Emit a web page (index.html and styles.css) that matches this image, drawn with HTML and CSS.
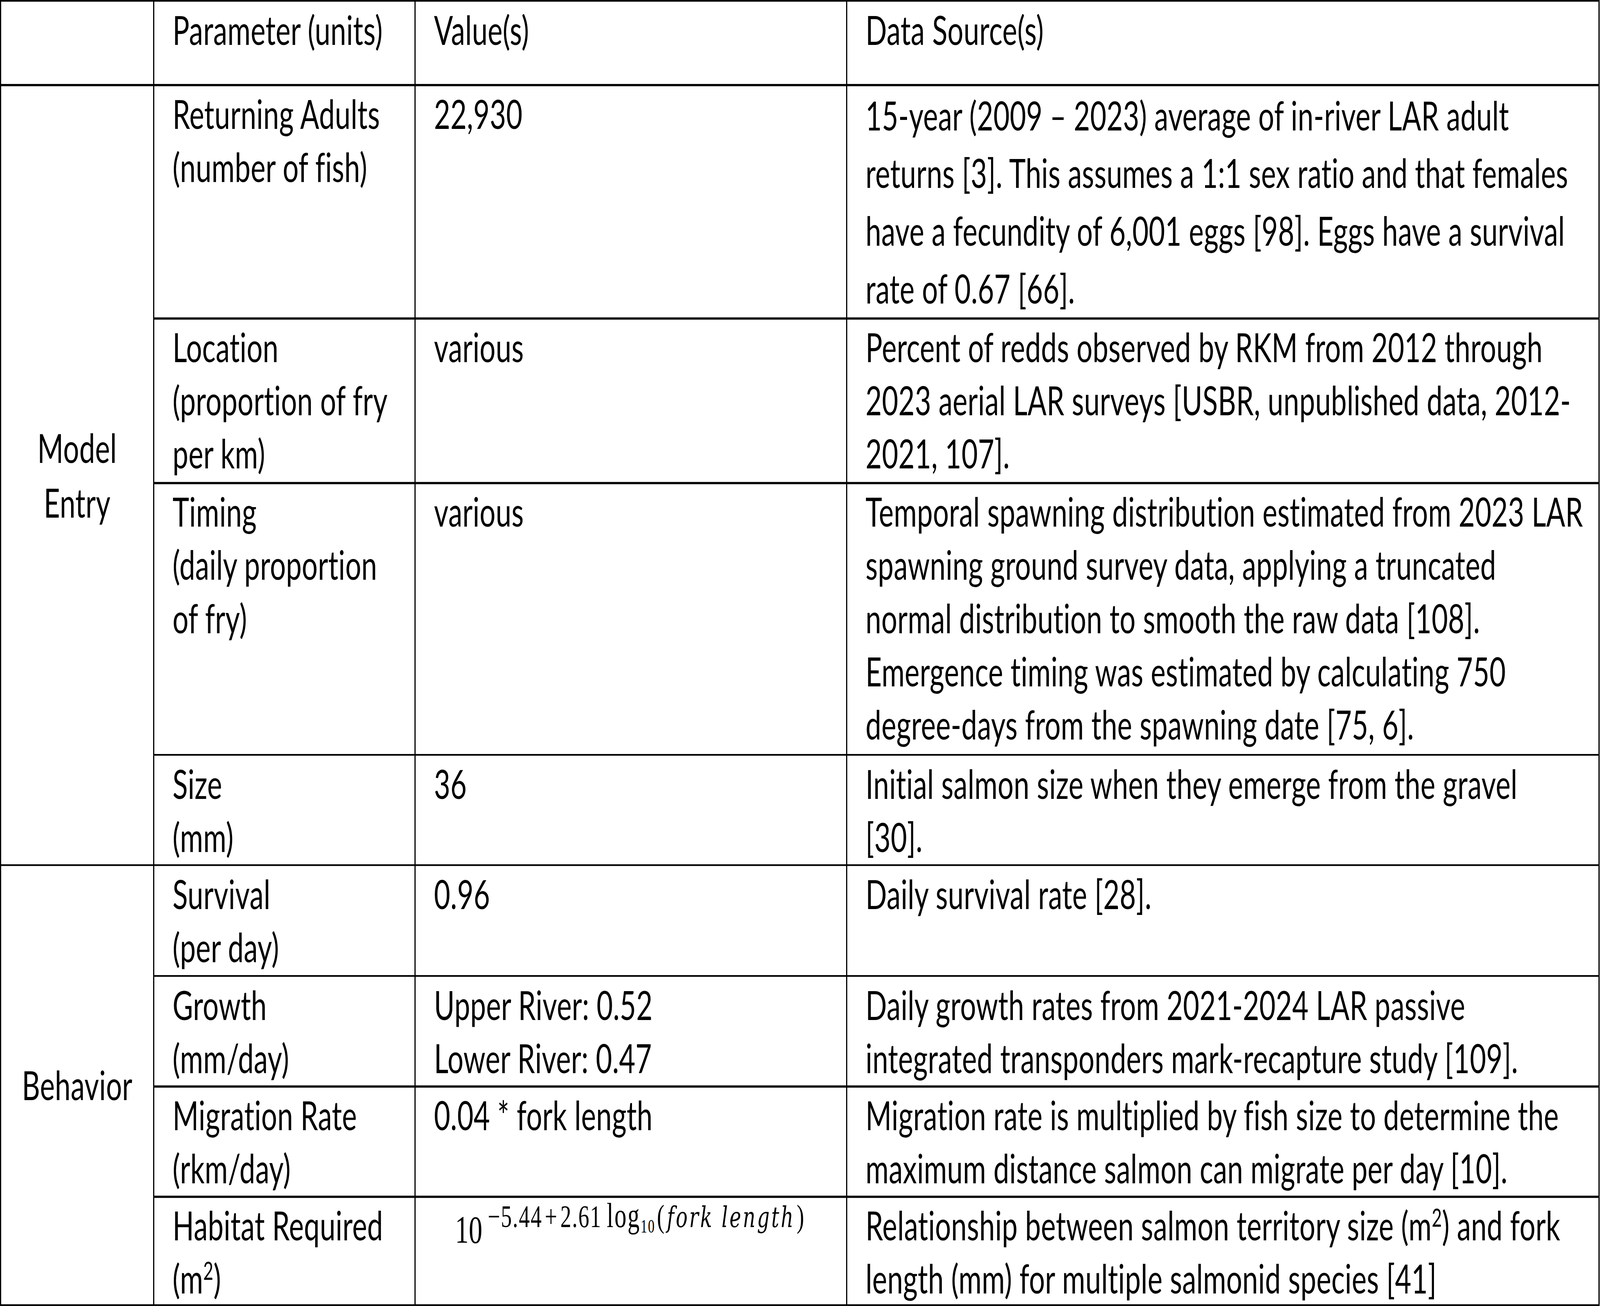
FILE: index.html
```html
<!DOCTYPE html>
<html lang="en">
<head>
<meta charset="utf-8">
<title>Model parameters</title>
<link rel="stylesheet" href="styles.css">
</head>
<body>
<div class="sheet">
  <div class="cell"></div>
  <div class="cell">Parameter (units)</div>
  <div class="cell">Value(s)</div>
  <div class="cell">Data Source(s)</div>

  <div class="cell group">Model<br>Entry</div>
  <div class="cell">Returning Adults<br>(number of fish)</div>
  <div class="cell">22,930</div>
  <div class="cell loose">15-year (2009 – 2023) average of in-river LAR adult<br>returns [3]. This assumes a 1:1 sex ratio and that females<br>have a fecundity of 6,001 eggs [98]. Eggs have a survival<br>rate of 0.67 [66].</div>

  <div class="cell">Location<br>(proportion of fry<br>per km)</div>
  <div class="cell">various</div>
  <div class="cell">Percent of redds observed by RKM from 2012 through<br>2023 aerial LAR surveys [USBR, unpublished data, 2012-<br>2021, 107].</div>

  <div class="cell">Timing<br>(daily proportion<br>of fry)</div>
  <div class="cell">various</div>
  <div class="cell">Temporal spawning distribution estimated from 2023 LAR<br>spawning ground survey data, applying a truncated<br>normal distribution to smooth the raw data [108].<br>Emergence timing was estimated by calculating 750<br>degree-days from the spawning date [75, 6].</div>

  <div class="cell">Size<br>(mm)</div>
  <div class="cell">36</div>
  <div class="cell">Initial salmon size when they emerge from the gravel<br>[30].</div>

  <div class="cell group">Behavior</div>
  <div class="cell">Survival<br>(per day)</div>
  <div class="cell">0.96</div>
  <div class="cell">Daily survival rate [28].</div>

  <div class="cell">Growth<br>(mm/day)</div>
  <div class="cell">Upper River: 0.52<br>Lower River: 0.47</div>
  <div class="cell">Daily growth rates from 2021-2024 LAR passive<br>integrated transponders mark-recapture study [109].</div>

  <div class="cell">Migration Rate<br>(rkm/day)</div>
  <div class="cell">0.04 * fork length</div>
  <div class="cell">Migration rate is multiplied by fish size to determine the<br>maximum distance salmon can migrate per day [10].</div>

  <div class="cell">Habitat Required<br>(m<sup class="pow">2</sup>)</div>
  <div class="cell formula"><span class="math"><span class="mbase">10</span><span class="msup">−5.44<span class="mop">+</span>2.61<span class="mfn">log</span><span class="msub">10</span><span class="mparen">(</span><span class="mvar">fork length</span><span class="mparen">)</span></span></span></div>
  <div class="cell">Relationship between salmon territory size (m<sup class="pow">2</sup>) and fork<br>length (mm) for multiple salmonid species [41]</div>
</div>
</body>
</html>
```

FILE: styles.css
```css
/* One unit = one pixel of the 5869 x 3343 design, measured across the window width. */
:root {
  --u: calc(100vw / 5869);
}

html {
  margin: 0;
  padding: 0;
  background: #ffffff;
  overflow: hidden;
}

body {
  margin: 0;
  padding: 0;
  min-height: 100vh;
  background: #ffffff;
}

.sheet {
  display: grid;
  grid-template-columns:
    calc(556 * var(--u)) calc(954 * var(--u)) calc(1578 * var(--u)) calc(2755 * var(--u));
  grid-template-rows:
    calc(210 * var(--u)) calc(593 * var(--u)) calc(416 * var(--u)) calc(691 * var(--u))
    calc(277 * var(--u)) calc(279 * var(--u)) calc(278 * var(--u)) calc(277 * var(--u))
    calc(272 * var(--u));
  gap: calc(5 * var(--u));
  padding: calc(5 * var(--u));
  width: max-content;
  background: #000000;
  font-family: Lato, "Noto Sans", sans-serif;
  font-size: calc(103 * var(--u));
  letter-spacing: calc(0.5 * var(--u));
  line-height: calc(136 * var(--u));
  color: #000000;
  /* stretch to the window height when the window is not 5869:3343 (factor 1 when it is) */
  transform-origin: 0 0;
  transform: scaleY(tan(atan2(100vh, calc(100vw * 3343 / 5869))));
}

.cell {
  background: #ffffff;
  padding: calc(2 * var(--u)) calc(12 * var(--u)) 0 calc(67 * var(--u));
  white-space: nowrap;
}

.group {
  grid-row: span 4;
  display: flex;
  align-items: center;
  justify-content: center;
  text-align: center;
  padding: 0;
  line-height: calc(140 * var(--u));
}

.loose {
  line-height: calc(148 * var(--u));
  padding-top: 0;
}

.pow {
  font-size: 0.62em;
  line-height: 0;
  vertical-align: 0.55em;
}

.formula {
  text-align: center;
  padding: calc(7 * var(--u)) 0 0 0;
  letter-spacing: 0;
}

.math {
  font-family: "Liberation Serif", "Times New Roman", serif;
  line-height: 1;
}

.mbase {
  font-size: calc(100 * var(--u));
  line-height: 1;
}

.msup {
  font-size: calc(80 * var(--u));
  letter-spacing: calc(3 * var(--u));
  line-height: 1;
  vertical-align: calc(40 * var(--u));
  margin-left: calc(20 * var(--u));
}

.mop {
  margin: 0 calc(9 * var(--u));
}

.mfn {
  margin-left: calc(18 * var(--u));
  font-size: calc(88 * var(--u));
  line-height: 0.85;
  letter-spacing: calc(4 * var(--u));
}

.msub {
  font-size: calc(48 * var(--u));
  line-height: 1;
  vertical-align: calc(-14 * var(--u));
}

.mparen {
  margin: 0 calc(6 * var(--u));
  font-size: calc(82 * var(--u));
  line-height: 0.9;
}

.mvar {
  font-family: "DejaVu Serif", serif;
  font-style: italic;
  font-size: calc(72 * var(--u));
  line-height: 1;
  letter-spacing: calc(6 * var(--u));
}
```
